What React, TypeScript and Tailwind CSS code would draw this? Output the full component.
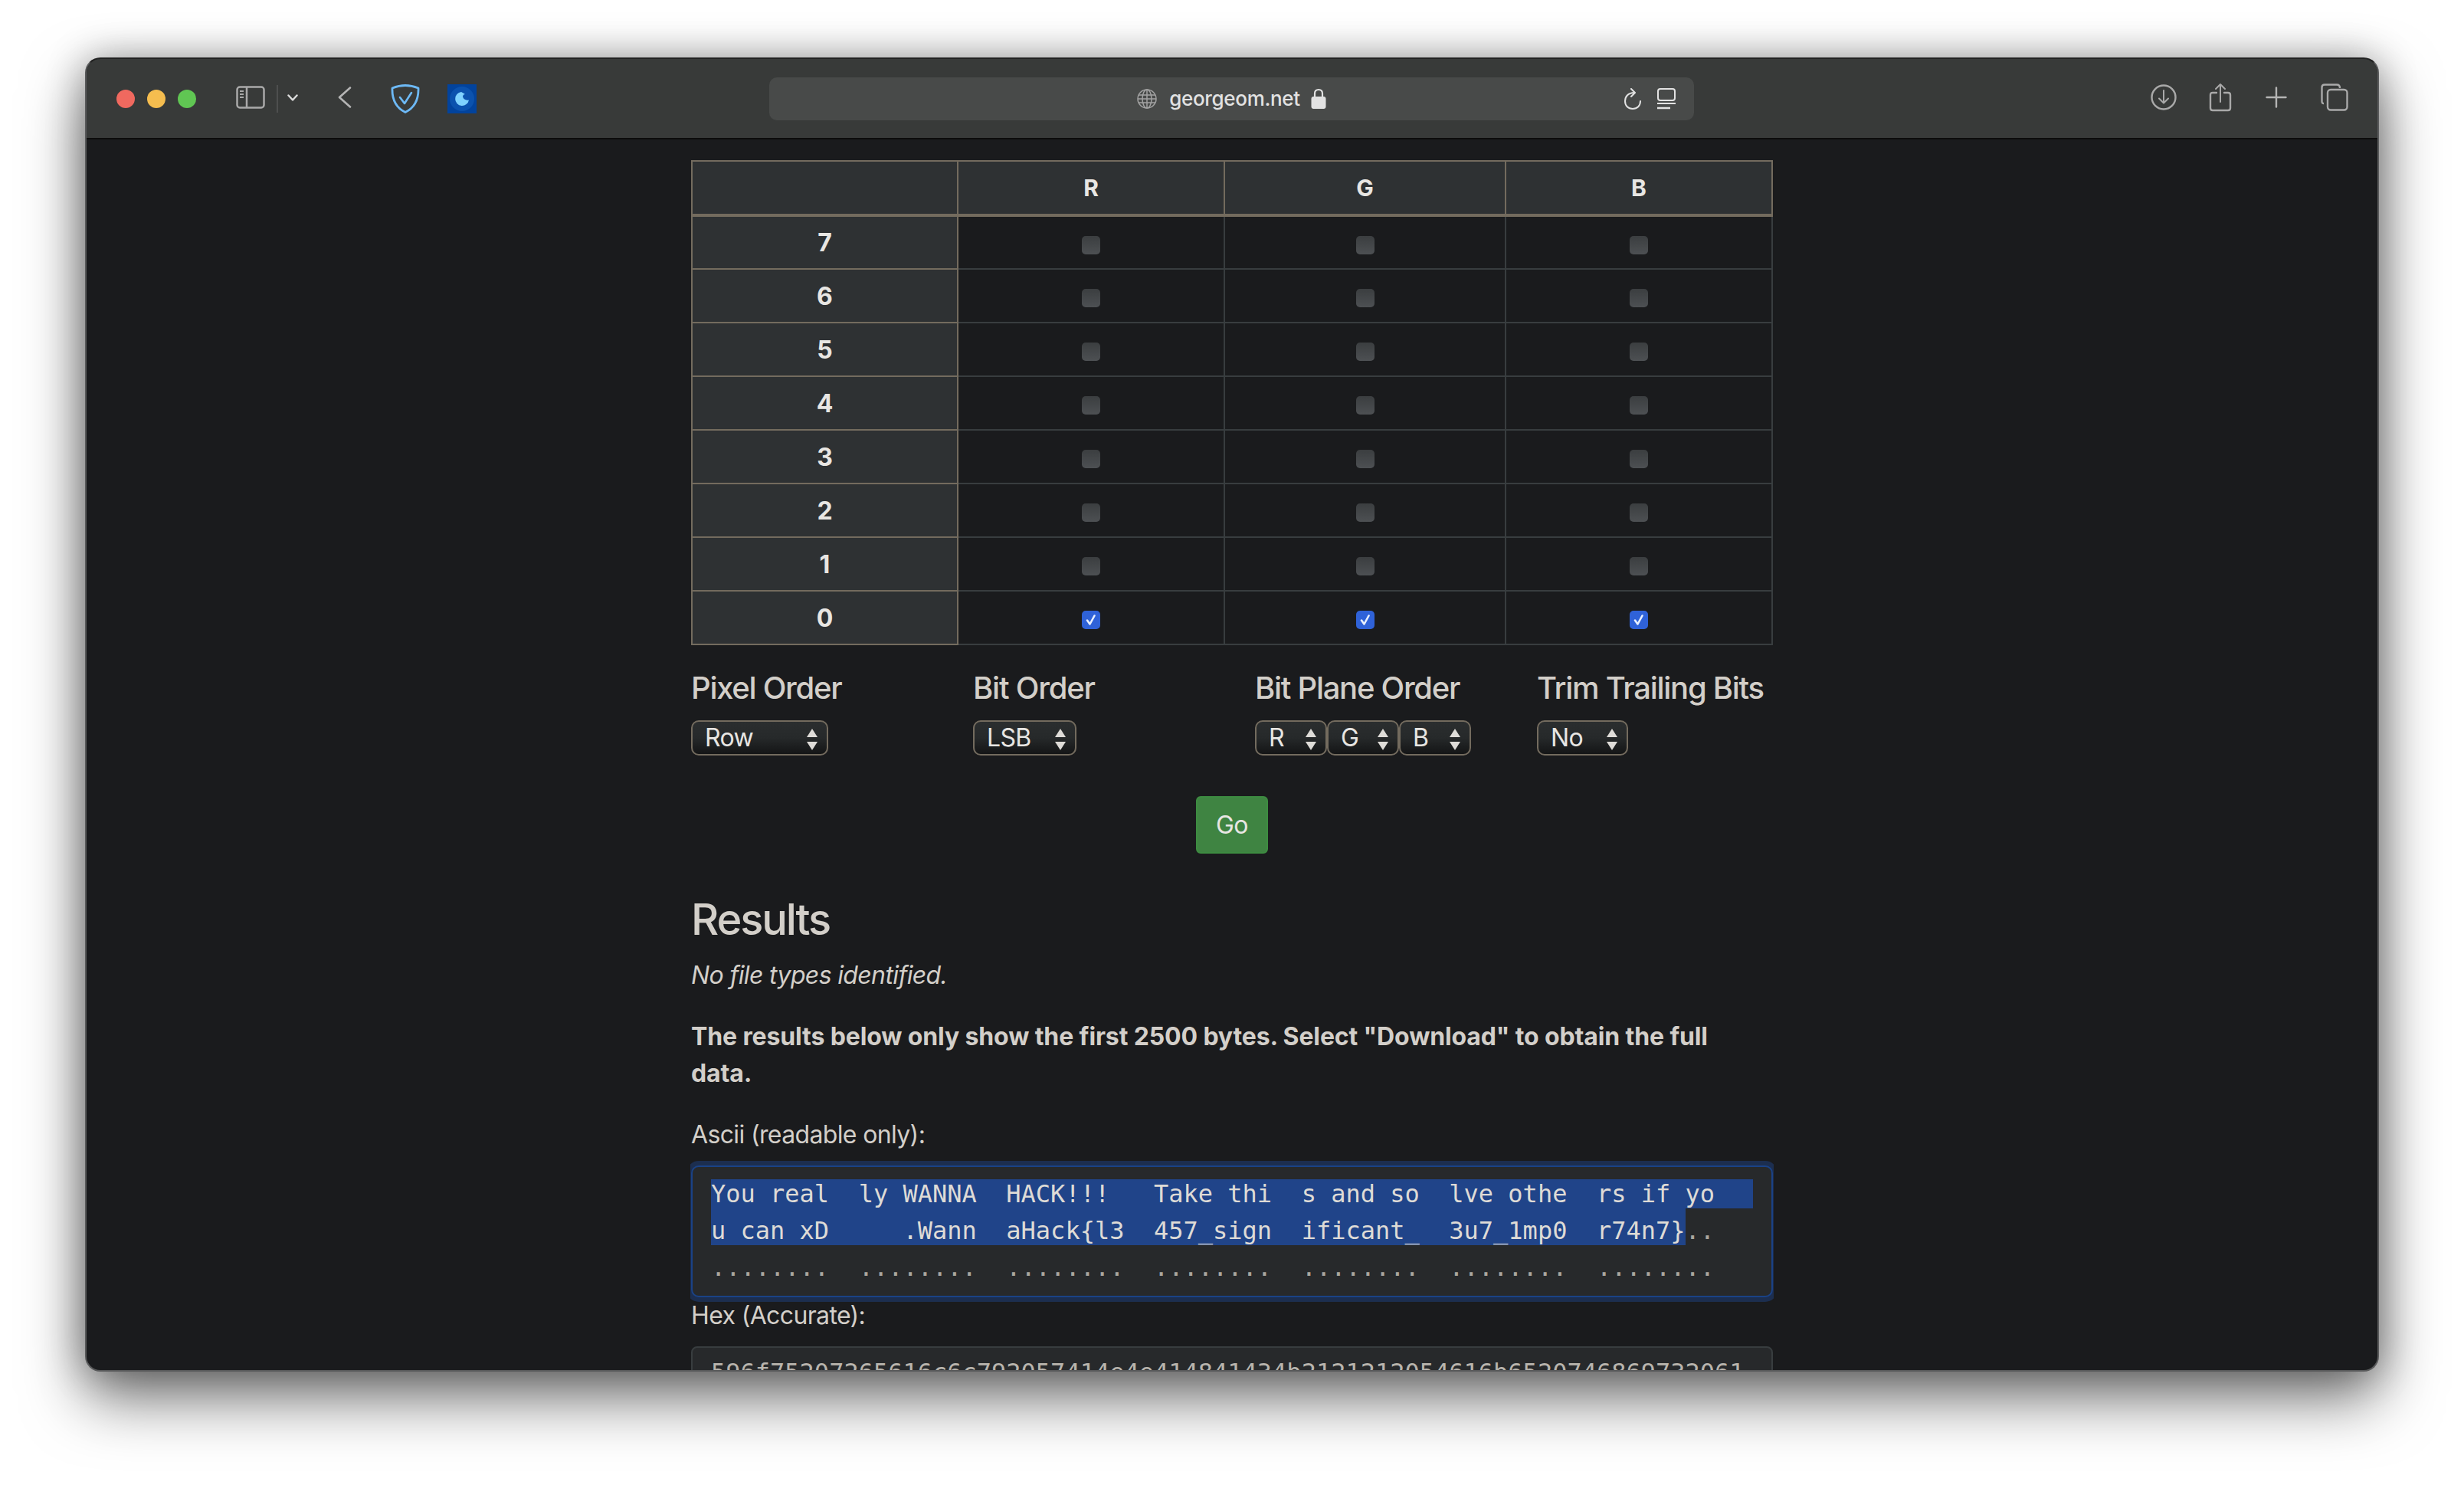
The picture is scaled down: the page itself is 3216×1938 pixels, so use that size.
import React from "react";

const rows = ["7", "6", "5", "4", "3", "2", "1", "0"];

const Checkbox = ({ checked }: { checked: boolean }) =>
  checked ? (
    <span className="mx-auto mt-[6px] flex h-6 w-6 items-center justify-center rounded-[5px] bg-[#2f62d8]">
      <svg width="18" height="18" viewBox="0 0 18 18" fill="none">
        <path d="M4 9.5 L7.5 14.5 L13.5 3.5" stroke="#e8f0ff" strokeWidth="2.6" strokeLinecap="round" strokeLinejoin="round" />
      </svg>
    </span>
  ) : (
    <span className="mx-auto mt-[6px] block h-6 w-6 rounded-[5px] bg-gradient-to-b from-[#3b3e40] to-[#4d5053]" />
  );

const Select = ({ label, className }: { label: string; className: string }) => (
  <div
    className={`relative h-[46px] rounded-[10px] border-2 border-[#736b5e] bg-gradient-to-b from-[#2b2e2f] via-[#26292a] to-[#141516] pl-[16px] text-[32px] leading-[41px] tracking-[-0.02em] text-[#e8e6e3] ${className}`}
  >
    {label}
    <svg className="absolute top-[9px] right-[11px]" width="16" height="28" viewBox="0 0 16 28" fill="#dedcd8">
      <path d="M8 0 L15 11 L1 11 Z" />
      <path d="M8 28 L15 17 L1 17 Z" />
    </svg>
  </div>
);

export default function App() {
  return (
    <div className="h-[1938px] w-[3216px] overflow-hidden bg-white pt-[75px] pl-[111px] font-[family-name:Inter,sans-serif]">
      <div className="flex h-[1715px] w-[2994px] flex-col overflow-hidden rounded-[20px] border-2 border-[#58595a] border-t-[#222] bg-[#1a1b1d] shadow-[0_35px_80px_rgba(0,0,0,0.55),0_0_50px_rgba(0,0,0,0.3)]">
        {/* toolbar */}
        <div className="flex h-[105px] shrink-0 items-center border-b-2 border-[#0c0c0c] bg-[#383a39] pl-[39px]">
          <span className="h-6 w-6 rounded-full bg-[#f0695f]" />
          <span className="ml-4 h-6 w-6 rounded-full bg-[#f5bd4f]" />
          <span className="ml-4 h-6 w-6 rounded-full bg-[#60c653]" />
          <svg className="mb-[3px] ml-[52px]" width="38" height="30" viewBox="0 0 38 30" fill="none" stroke="#a9a9a9" strokeWidth="2.5">
            <rect x="1.5" y="1.5" width="35" height="27" rx="3.5" />
            <path d="M14 1.5 V28.5" />
            <path d="M5 7 H10 M5 11 H10 M5 15 H10" strokeWidth="2" />
          </svg>
          <span className="ml-[15px] h-9 w-[2px] bg-[#4e4f4f]" />
          <svg className="mb-[3px] ml-[12px]" width="14" height="9" viewBox="0 0 14 9" fill="none" stroke="#dcdcdc" strokeWidth="2.4" strokeLinecap="round" strokeLinejoin="round">
            <path d="M1.5 1.5 L7 7.5 L12.5 1.5" />
          </svg>
          <svg className="mb-[3px] ml-[52px]" width="18" height="28" viewBox="0 0 18 28" fill="none" stroke="#b4b4b4" strokeWidth="2.6" strokeLinecap="round" strokeLinejoin="round">
            <path d="M16 1.5 L2 14 L16 26.5" />
          </svg>
          <svg className="ml-[51px]" width="38" height="38" viewBox="0 0 38 38" fill="none" stroke="#6db9f6" strokeLinecap="round" strokeLinejoin="round">
            <path d="M19 1.5 C25 1.5 31 3 36 5 C36.5 19 32 30 19 36.5 C6 30 1.5 19 2 5 C7 3 13 1.5 19 1.5 Z" strokeWidth="2.8" />
            <path d="M12 17 L18 25 L27 11" strokeWidth="2.6" />
          </svg>
          <div className="ml-[36px] flex h-[38px] w-[38px] items-center justify-center bg-[#02439d]">
            <div className="flex h-[32px] w-[32px] items-center justify-center rounded-full bg-[#0b52ae]">
              <svg width="20" height="20" viewBox="0 0 20 20" fill="#7fd2ff">
                <path d="M9 1 A9 9 0 1 0 19 11.5 A6.5 6.5 0 0 1 11 7.5 C11 5 12.5 4 14 4 C12.5 3 11 2 9 1 Z" />
              </svg>
            </div>
          </div>
          <div className="ml-[382px] grid h-[56px] w-[1207px] grid-cols-[1fr_auto_1fr] items-center rounded-[10px] bg-[#484a49]">
            <span />
            <div className="flex items-center">
              <svg width="26" height="26" viewBox="0 0 26 26" fill="none" stroke="#a2a2a2" strokeWidth="1.5">
                <circle cx="13" cy="13" r="12" />
                <ellipse cx="13" cy="13" rx="6" ry="12" />
                <path d="M13 1 V25 M2 8 H24 M2 18 H24 M1 13 H25" />
              </svg>
              <span className="ml-[16px] text-[26px] leading-none font-medium tracking-[-0.012em] text-[#e2e2e2]">georgeom.net</span>
              <svg className="ml-[14px]" width="20" height="27" viewBox="0 0 20 27" fill="#e2e2e2">
                <path d="M5 12 V7 C5 3.5 7 2 10 2 C13 2 15 3.5 15 7 V12" fill="none" stroke="#e2e2e2" strokeWidth="2.2" />
                <rect x="0.5" y="11" width="19" height="16" rx="3" />
              </svg>
            </div>
            <div className="flex items-center justify-end pr-[23px]">
              <svg width="24" height="28" viewBox="0 0 24 28" fill="none" stroke="#e2e2e2" strokeWidth="2" strokeLinecap="round" strokeLinejoin="round">
                <path d="M14 6 C6 6 2 11 2 17 C2 23 6 27 12 27 C18 27 22 23 22 17" />
                <path d="M10 1 L15 6 L10 11" />
              </svg>
              <svg className="ml-[19px]" width="26" height="28" viewBox="0 0 26 28" fill="none" stroke="#e2e2e2" strokeWidth="2">
                <rect x="2" y="1" width="22" height="15" rx="3" />
                <path d="M1 20 H25" />
                <path d="M1 26 H18" strokeWidth="2.4" />
              </svg>
            </div>
          </div>
          <svg className="mb-[3px] ml-[595px]" width="36" height="34" viewBox="0 0 36 34" fill="none" stroke="#a9a9a9" strokeWidth="2.4" strokeLinecap="round" strokeLinejoin="round">
            <circle cx="18" cy="17" r="15.5" />
            <path d="M18 8 V24 M12 18.5 L18 24.5 L24 18.5" strokeWidth="2" />
          </svg>
          <svg className="mb-[3px] ml-[41px]" width="30" height="38" viewBox="0 0 30 38" fill="none" stroke="#a9a9a9" strokeWidth="2.4" strokeLinecap="round" strokeLinejoin="round">
            <path d="M10 13 H5 C3 13 2 14 2 16 V33 C2 35 3 36 5 36 H25 C27 36 28 35 28 33 V16 C28 14 27 13 25 13 H20" />
            <path d="M15 2 V25 M9 8 L15 2 L21 8" strokeWidth="2" />
          </svg>
          <svg className="mb-[3px] ml-[44px]" width="28" height="28" viewBox="0 0 28 28" fill="none" stroke="#b4b4b4" strokeWidth="2.4" strokeLinecap="round">
            <path d="M14 1.5 V26.5 M1.5 14 H26.5" />
          </svg>
          <svg className="mb-[3px] ml-[44px]" width="36" height="36" viewBox="0 0 36 36" fill="none" stroke="#a9a9a9" strokeWidth="2.4" strokeLinejoin="round">
            <path d="M4 26 C2 26 1.5 25 1.5 23 V5 C1.5 3 2.5 1.5 5 1.5 H21 C23.5 1.5 25 3 25 6" />
            <rect x="9" y="8" width="25.5" height="26.5" rx="4" />
          </svg>
        </div>

        {/* page */}
        <div className="mx-auto min-h-0 w-[1414px] flex-1 overflow-hidden pt-[27px] pl-[1px] text-[32px] leading-[48px] tracking-[-0.02em] text-[#d3cfc9]">
          <table className="w-[1412px] table-fixed border-collapse">
            <colgroup>
              <col className="w-[347px]" />
              <col className="w-[348px]" />
              <col className="w-[367px]" />
              <col />
            </colgroup>
            <thead>
              <tr className="h-[71px] bg-[#2e3133] text-[#e8e6e3]">
                <th className="border-2 border-b-4 border-[#736b5e]" />
                {["R", "G", "B"].map((c) => (
                  <th key={c} className="border-2 border-b-4 border-[#736b5e] text-[30px] font-bold tracking-normal">
                    {c}
                  </th>
                ))}
              </tr>
            </thead>
            <tbody>
              {rows.map((r) => (
                <tr key={r} className="h-[70px]">
                  <th className="border-2 border-[#736b5e] bg-[#2e3133] pt-[1px] text-[32px] font-bold tracking-normal text-[#e8e6e3]">{r}</th>
                  {["R", "G", "B"].map((c) => (
                    <td key={c} className="border-2 border-[#383d3f] text-center">
                      <Checkbox checked={r === "0"} />
                    </td>
                  ))}
                </tr>
              ))}
            </tbody>
          </table>

          <div className="mt-[32px] grid w-[1412px] grid-cols-[368px_368px_368px_1fr]">
            <div>
              <div className="text-[40px] font-medium tracking-[-0.032em]">Pixel Order</div>
              <Select label="Row" className="mt-[18px] w-[179px]" />
            </div>
            <div>
              <div className="text-[40px] font-medium tracking-[-0.03em]">Bit Order</div>
              <Select label="LSB" className="mt-[18px] w-[135px]" />
            </div>
            <div>
              <div className="text-[40px] font-medium tracking-[-0.032em]">Bit Plane Order</div>
              <div className="mt-[18px] flex">
                <Select label="R" className="w-[94px]" />
                <Select label="G" className="w-[94px]" />
                <Select label="B" className="w-[94px]" />
              </div>
            </div>
            <div>
              <div className="text-[40px] font-medium tracking-[-0.032em] whitespace-nowrap">Trim Trailing Bits</div>
              <Select label="No" className="mt-[18px] w-[119px]" />
            </div>
          </div>

          <div className="mt-[53px] flex w-[1412px] justify-center">
            <button className="h-[75px] w-[94px] rounded-[6px] border-2 border-[#3d8c41] bg-[#3f8442] text-[32px] text-[#e8e6e3]">Go</button>
          </div>

          <h2 className="mt-[53px] text-[56px] leading-[67px] font-medium tracking-[-0.038em]">Results</h2>
          <p className="mt-[15px] italic">No file types identified.</p>
          <p className="mt-[32px] font-bold tracking-[-0.004em]">
            The results below only show the first 2500 bytes. Select "Download" to obtain the full
            <br />
            data.
          </p>
          <p className="mt-[32px]">Ascii (readable only):</p>

          <div className="mt-[16px] h-[172px] w-[1412px] rounded-[10px] border-2 border-[#1a4286] bg-[#27292b] pt-[16px] pl-[24px] font-[family-name:'DejaVu_Sans_Mono',monospace] tracking-normal text-[#dedbd6] shadow-[0_0_0_6px_#1c2e4f]">
            <div className="w-[1360px] bg-[#204489] leading-[38px] whitespace-pre">You real  ly WANNA  HACK!!!   Take thi  s and so  lve othe  rs if yo</div>
            <div className="flex leading-[38px] whitespace-pre">
              <span className="block bg-[#204489] pt-[10px]">u can xD     .Wann  aHack{"{"}l3  457_sign  ificant_  3u7_1mp0  r74n7{"}"}</span>
              <span className="block pt-[10px] text-[#aaa69f]">..</span>
            </div>
            <div className="pt-[10px] leading-[38px] whitespace-pre text-[#aaa69f]">........  ........  ........  ........  ........  ........  ........</div>
          </div>

          <p>Hex (Accurate):</p>
          <div className="mt-[16px] h-[60px] w-[1412px] rounded-t-[8px] border-2 border-[#383d3f] bg-[#27292b] pt-[13px] pl-[24px] font-[family-name:'DejaVu_Sans_Mono',monospace] leading-[38px] tracking-normal whitespace-pre text-[#b8b4ad]">
            596f75207265616c6c792057414e4e414841434b2121212054616b6520746869732061
          </div>
        </div>
      </div>
    </div>
  );
}
